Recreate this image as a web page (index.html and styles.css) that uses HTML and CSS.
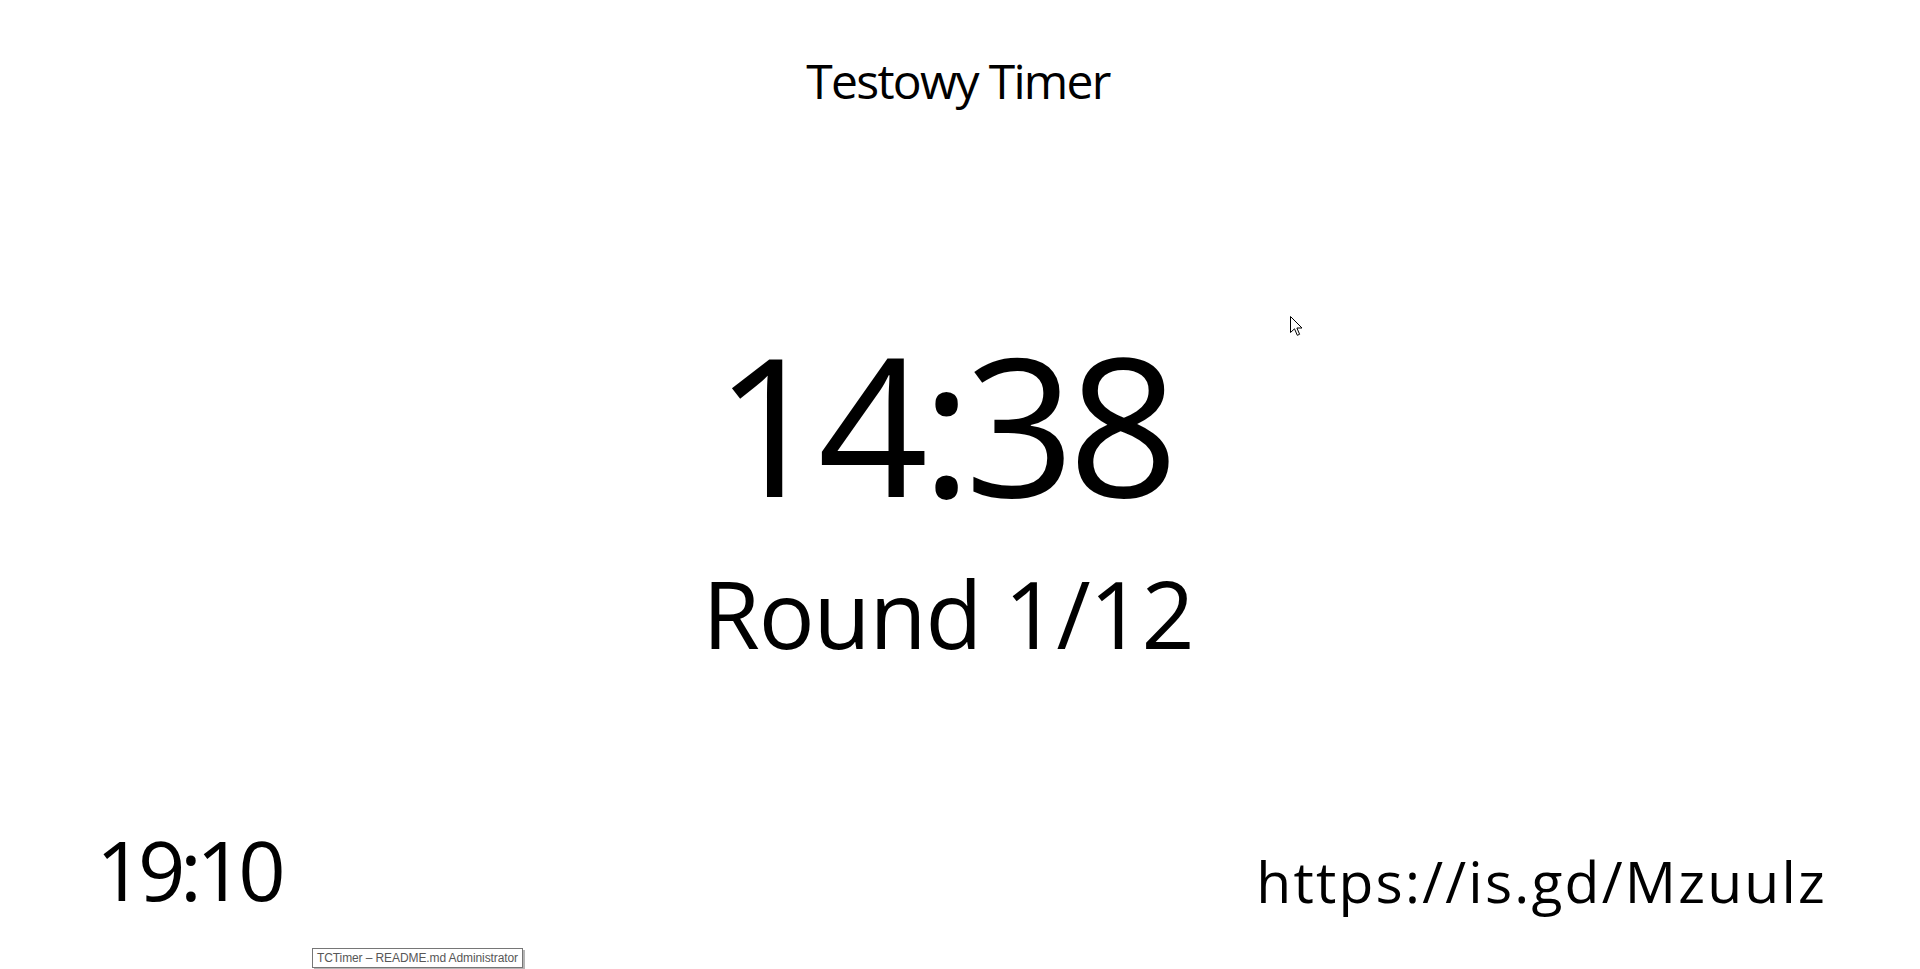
FILE: index.html
```html
<!DOCTYPE html>
<html lang="pl">
<head>
<meta charset="utf-8">
<title>TCTimer</title>
<link rel="stylesheet" href="styles.css">
</head>
<body>
<div class="screen">
  <header class="title">Testowy Timer</header>
  <main class="center">
    <div class="timer">14:38</div>
    <div class="round">Round 1/12</div>
  </main>
  <footer class="footer">
    <div class="clock">19:10</div>
    <div class="url">https://is.gd/Mzuulz</div>
  </footer>
  <div class="tooltip">TCTimer – README.md Administrator</div>
  <svg class="cursor" width="13" height="21" viewBox="0 0 13 21"><path d="M0.5 0.5 L0.5 16.5 L4.5 12.8 L7.3 19.3 L9.6 18.3 L6.9 12 L12 12 Z" fill="#fff" stroke="#000" stroke-width="1" stroke-linejoin="miter"/></svg>
</div>
</body>
</html>
```
FILE: styles.css
```css
html, body {
  margin: 0;
  padding: 0;
  background: #fff;
}
.screen {
  position: relative;
  height: 969px;
  display: flex;
  flex-direction: column;
  font-family: "Open Sans", "Noto Sans", sans-serif;
  color: #000;
  overflow: hidden;
}
.title {
  margin-top: 57px;
  font-size: 48px;
  line-height: 1;
  letter-spacing: -1.7px;
  text-align: center;
  padding-right: 4px;
}
.center {
  margin-top: 221px;
  display: flex;
  flex-direction: column;
  align-items: center;
}
.timer {
  font-size: 193px;
  line-height: 1;
  letter-spacing: -7px;
  padding-right: 34px;
}
.round {
  margin-top: 48px;
  font-size: 93px;
  line-height: 1;
  letter-spacing: -1.1px;
  padding-right: 24px;
}
.footer {
  margin-top: auto;
  margin-bottom: 59px;
  display: flex;
  justify-content: space-between;
  align-items: flex-end;
  padding: 0 93px 0 96px;
}
.clock {
  font-size: 83px;
  line-height: 1;
  letter-spacing: -5.5px;
}
.url {
  font-size: 57px;
  line-height: 1;
  letter-spacing: 2.2px;
}
.tooltip {
  position: absolute;
  left: 312px;
  top: 948px;
  height: 18px;
  padding: 0 4px;
  border: 1px solid #767676;
  background: #fff;
  color: #575757;
  font-family: "Liberation Sans", sans-serif;
  font-size: 12px;
  line-height: 18px;
  letter-spacing: -0.1px;
  box-shadow: 2px 2px 0 #b5b5b5;
}
.cursor {
  position: absolute;
  left: 1290px;
  top: 316px;
}
```
